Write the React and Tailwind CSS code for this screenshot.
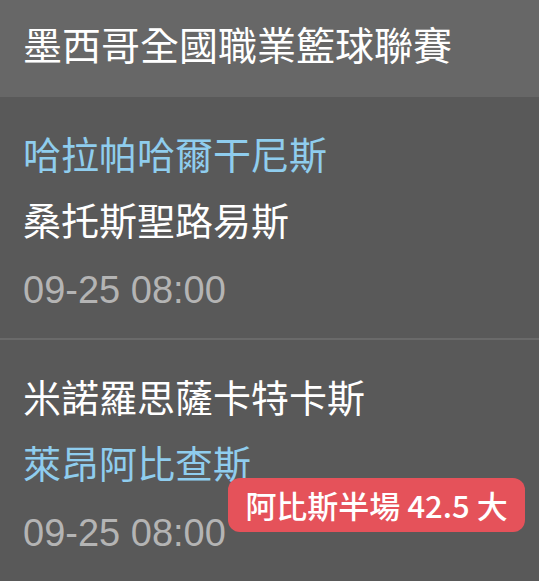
export default function App() {
  const font = { fontFamily: '"Liberation Sans", "Noto Sans CJK TC", sans-serif' };
  const Match = ({ home, away, homeBlue, time, badge }) => (
    <div className="relative px-[23px] pt-[26px] pb-[13px]">
      <div className={`h-[66px] flex items-center text-[38px] ${homeBlue ? "text-[#8fcdee]" : "text-white"}`}>{home}</div>
      <div className={`h-[66px] flex items-center text-[38px] ${homeBlue ? "text-white" : "text-[#8fcdee]"}`}>{away}</div>
      <div className="h-[70px] flex items-center text-[38px] text-[#b4b4b4]">{time}</div>
      {badge && (
        <div
          className="absolute right-[14px] top-[138px] h-[54px] w-[297px] rounded-[12px] bg-[#e5525a] flex items-center justify-center text-[31px] font-medium text-white"
          style={{ fontFamily: '"Noto Sans CJK TC", sans-serif' }}
        >
          <span>阿比斯半場</span>
          <span className="ml-[7px]">42.5</span>
          <span className="ml-[7px]">大</span>
        </div>
      )}
    </div>
  );
  return (
    <div className="w-[539px] h-[581px] bg-[#595959] overflow-hidden" style={font}>
      <div className="h-[97px] bg-[#676767] flex items-center px-[23px] pb-[3px] text-[39px] text-white">墨西哥全國職業籃球聯賽</div>
      <Match home="哈拉帕哈爾干尼斯" away="桑托斯聖路易斯" homeBlue time="09-25 08:00" />
      <div className="h-[2px] bg-[#6a6a6a]" />
      <Match home="米諾羅思薩卡特卡斯" away="萊昂阿比查斯" time="09-25 08:00" badge />
    </div>
  );
}
